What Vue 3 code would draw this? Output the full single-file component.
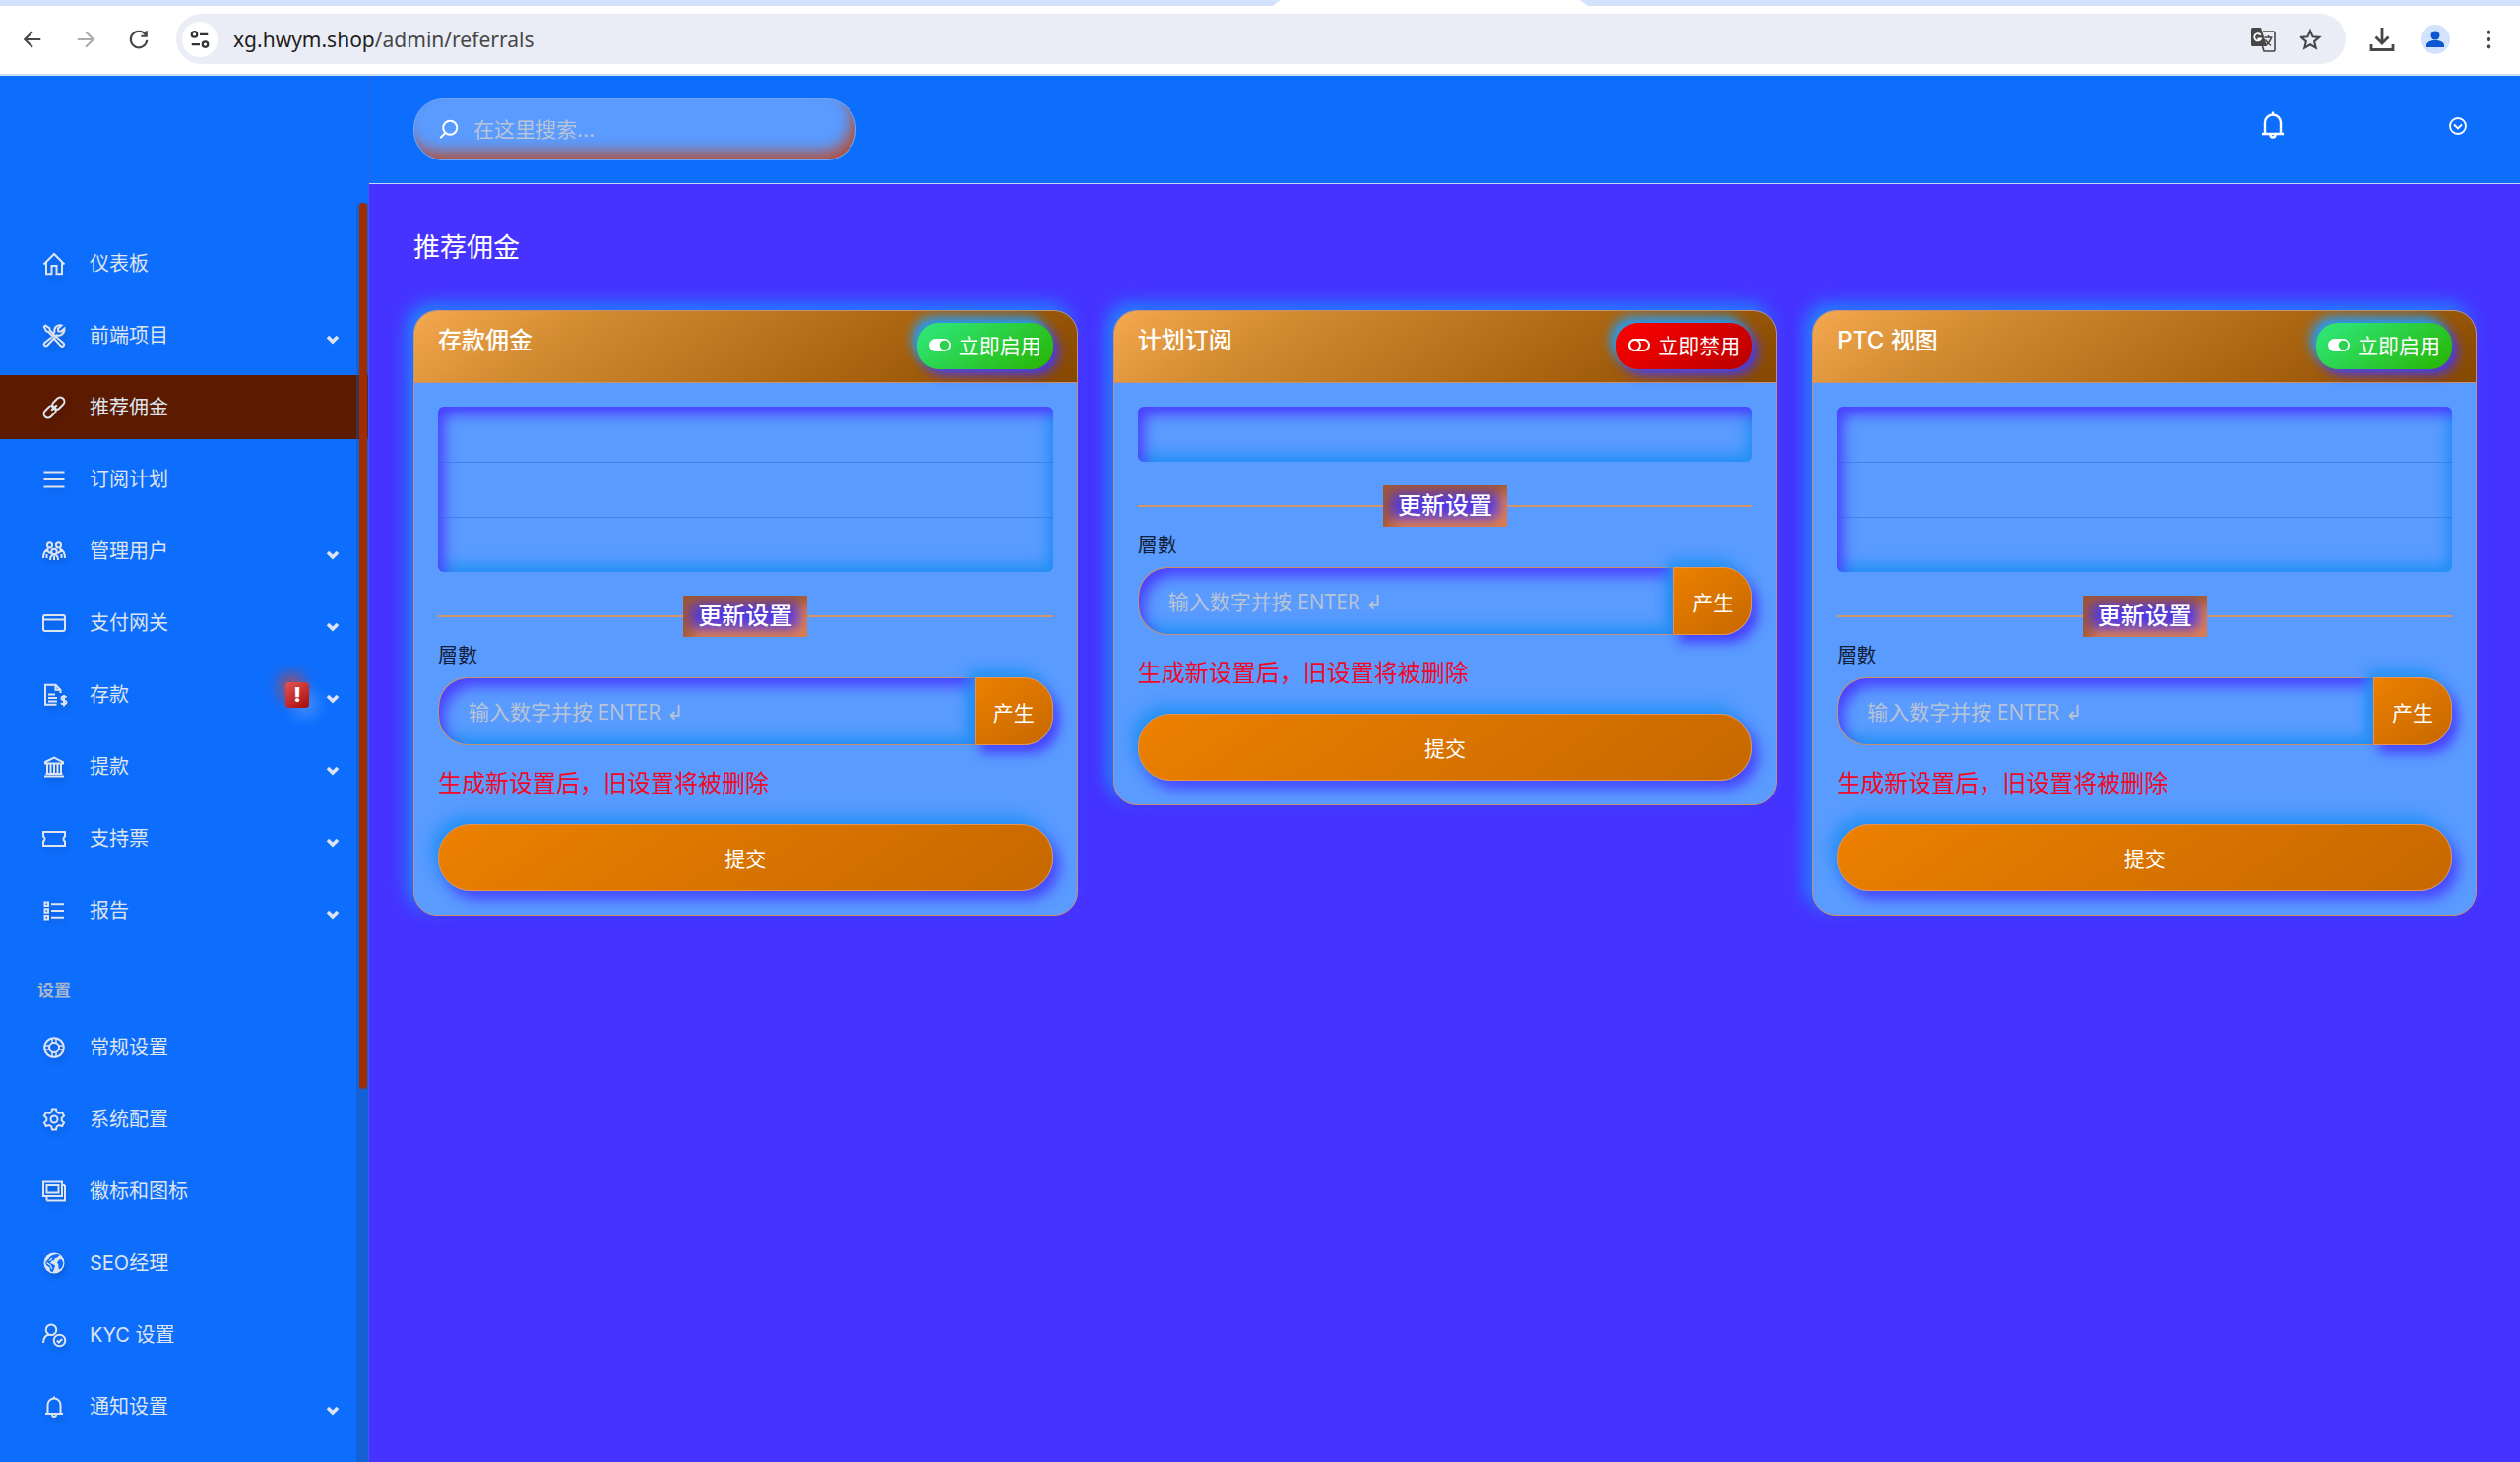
<template>
  <div class="window">
    <div class="tab-strip">
      <div class="active-tab"></div>
    </div>
    <div class="toolbar">
      <button class="tool" type="button" aria-label="后退">
        <svg viewBox="0 0 24 24" class="tool-icon"><path d="M21 12H4M12 3.500 3.500 12l8.500 8.500" /></svg>
      </button>
      <button class="tool tool-muted" type="button" aria-label="前进">
        <svg viewBox="0 0 24 24" class="tool-icon"><path d="M3 12h17M12 3.500l8.500 8.500-8.500 8.500" /></svg>
      </button>
      <button class="tool" type="button" aria-label="重新加载">
        <svg viewBox="0 0 24 24" class="tool-icon"><path d="M19.500 7A9 9 0 1 0 21 13M20.500 2.500V8.500H14.500" /></svg>
      </button>
      <div class="address">
        <span class="site-info">
          <svg viewBox="0 0 24 24" class="site-icon">
            <circle cx="6" cy="6.500" r="3" /><path d="M12 6.500h9M3 17.500h9" /><circle cx="18" cy="17.500" r="3" />
          </svg>
        </span>
        <span class="url"><b>xg.hwym.shop</b>/admin/referrals</span>
        <button class="tool" type="button" aria-label="翻译">
          <svg viewBox="0 0 26 26" class="translate-icon">
            <path d="M2.500 1H11l6 19H2.500A1.500 1.500 0 0 1 1 18.500v-16A1.500 1.500 0 0 1 2.500 1Z" fill="#474747" />
            <path d="M13 5h10.500A1.500 1.500 0 0 1 25 6.500v17a1.500 1.500 0 0 1-1.500 1.500H14l-1.500-5" fill="none" stroke="#474747" stroke-width="1.600" />
            <path d="M10.800 8.800A3.600 3.600 0 1 0 11 12.500H7.500" fill="none" stroke="#fff" stroke-width="1.800" />
            <path d="M14.500 11h8M18.500 9v2M21.500 11c-1 4-3 6-5.500 8M15.500 13.500c2 3 3.500 4.500 5.500 6" fill="none" stroke="#474747" stroke-width="1.500" />
          </svg>
        </button>
        <button class="tool" type="button" aria-label="收藏">
          <svg viewBox="0 0 24 24" class="tool-icon"><path d="m12 2.500 2.800 6.600 7.200.6-5.500 4.700 1.700 7-6.200-3.700-6.200 3.700 1.700-7L2 9.700l7.200-.6Z" /></svg>
        </button>
      </div>
      <button class="tool download" type="button" aria-label="下载">
        <svg viewBox="0 0 26 26" class="tool-icon"><path d="M13 1v16M6.500 10.500 13 17l6.500-6.500M2 18v5.500h22V18" stroke-width="2.800" /></svg>
      </button>
      <button class="tool profile" type="button" aria-label="个人资料">
        <svg viewBox="0 0 24 24" class="profile-icon"><circle cx="12" cy="8" r="4.500" /><path d="M3 20v-2c0-3.500 4.500-5 9-5s9 1.500 9 5v2Z" /></svg>
      </button>
      <button class="tool" type="button" aria-label="更多">
        <svg viewBox="0 0 24 24" class="more-icon"><circle cx="12" cy="4" r="2.400" /><circle cx="12" cy="12" r="2.400" /><circle cx="12" cy="20" r="2.400" /></svg>
      </button>
    </div>

    <div class="page">
      <aside class="sidebar">
        <nav class="menu">
          <a
            v-for="item in mainMenu"
            :key="item.label"
            href="#"
            class="menu-item"
            :class="{ active: item.active }"
          >
            <svg class="menu-icon" viewBox="0 0 24 24" v-html="icons[item.icon]"></svg>
            <span class="menu-label">{{ item.label }}</span>
            <span v-if="item.alert" class="alert">!</span>
            <svg v-if="item.children" class="chevron" viewBox="0 0 14 10"><path d="m2 2 5 5 5-5" /></svg>
          </a>
          <h2 class="menu-heading">设置</h2>
          <a v-for="item in settingsMenu" :key="item.label" href="#" class="menu-item">
            <svg class="menu-icon" viewBox="0 0 24 24" v-html="icons[item.icon]"></svg>
            <span class="menu-label">{{ item.label }}</span>
            <svg v-if="item.children" class="chevron" viewBox="0 0 14 10"><path d="m2 2 5 5 5-5" /></svg>
          </a>
        </nav>
        <div class="scroll-track"><div class="scroll-thumb"></div></div>
      </aside>

      <div class="content">
        <header class="topbar">
          <label class="search">
            <svg viewBox="0 0 24 24" class="search-icon"><circle cx="14" cy="10" r="8" /><path d="m8.500 16-6 6" /></svg>
            <input type="search" placeholder="在这里搜索..." aria-label="搜索" />
          </label>
          <button class="top-button" type="button" aria-label="通知">
            <svg viewBox="0 0 24 30" class="bell-icon">
              <path d="M4 24V12.500a8 8 0 0 1 16 0V24M1 24h22M12 4.500V1.500" /><path d="M9.500 25a2.500 2.500 0 1 0 5 0" />
            </svg>
          </button>
          <button class="top-button account" type="button" aria-label="账户">
            <svg viewBox="0 0 18 18" class="account-icon"><circle cx="9" cy="9" r="8" /><path d="m5 7.500 4 4 4-4" /></svg>
          </button>
        </header>

        <main class="main">
          <h1 class="title">推荐佣金</h1>
          <div class="cards">
            <section v-for="(card, index) in cards" :key="card.title" class="card">
              <div class="card-header">
                <h3>{{ card.title }}</h3>
                <button type="button" class="toggle" :class="card.enabled ? 'toggle-disable' : 'toggle-enable'">
                  <svg viewBox="0 0 22 13" class="toggle-icon">
                    <template v-if="card.enabled">
                      <rect x="1" y="1" width="20" height="11" rx="5.500" />
                      <circle cx="6.500" cy="6.500" r="5.500" />
                    </template>
                    <template v-else>
                      <rect x="0" y="0" width="22" height="13" rx="6.500" fill="#fff" stroke="none" />
                      <circle cx="15.500" cy="6.500" r="4.800" fill="#2dd251" stroke="none" />
                    </template>
                  </svg>
                  {{ card.enabled ? '立即禁用' : '立即启用' }}
                </button>
              </div>
              <div class="card-body">
                <ul class="levels">
                  <li v-for="row in card.levels" :key="row"></li>
                </ul>
                <div class="divider"><h4>更新设置</h4></div>
                <label class="field-label" :for="`level-${index}`">層數</label>
                <div class="input-group">
                  <input :id="`level-${index}`" type="text" placeholder="输入数字并按 ENTER ↲" />
                  <button type="button">产生</button>
                </div>
                <p class="warning">生成新设置后，旧设置将被删除</p>
                <button type="submit" class="submit">提交</button>
              </div>
            </section>
          </div>
        </main>
      </div>
    </div>
  </div>
</template>

<script setup>
const mainMenu = [
  { label: '仪表板', icon: 'home' },
  { label: '前端项目', icon: 'tools', children: true },
  { label: '推荐佣金', icon: 'link', active: true },
  { label: '订阅计划', icon: 'bars' },
  { label: '管理用户', icon: 'users', children: true },
  { label: '支付网关', icon: 'card', children: true },
  { label: '存款', icon: 'invoice', alert: true, children: true },
  { label: '提款', icon: 'bank', children: true },
  { label: '支持票', icon: 'ticket', children: true },
  { label: '报告', icon: 'list', children: true }
]

const settingsMenu = [
  { label: '常规设置', icon: 'ring' },
  { label: '系统配置', icon: 'gear' },
  { label: '徽标和图标', icon: 'images' },
  { label: 'SEO经理', icon: 'globe' },
  { label: 'KYC 设置', icon: 'userCheck' },
  { label: '通知设置', icon: 'bell', children: true }
]

const cards = [
  { title: '存款佣金', levels: 3, enabled: false },
  { title: '计划订阅', levels: 1, enabled: true },
  { title: 'PTC 视图', levels: 3, enabled: false }
]

const icons = {
  home: '<path d="M1.500 12.500 12 2l10.500 10.500M4 10.500v11.700h5.500V14h5v8.200H20V10.500"/>',
  tools:
    '<path d="m1.800 3 1.400-1.400 4 2.600.6 2.300 4.400 4.400-1.600 1.600-4.400-4.400-2.200-.8ZM14 13l7.500 6.500a1.900 1.900 0 0 1-2.700 2.700L12.500 15.500M9.500 13.500 2.200 19.200a2 2 0 0 0 2.800 2.800L14.800 11.500c3.500 1 8-1.500 7.600-7l-3.600 3.200-2.500-.4-.4-2.500L19.400 1.500c-4-1-8 2-7 6.500l-2 2"/>',
  link:
    '<g transform="rotate(-45 12 12)"><rect x="-1" y="7.800" width="14" height="8.400" rx="4.200"/><rect x="11" y="7.800" width="14" height="8.400" rx="4.200"/><path d="M8 12h8"/></g>',
  bars: '<path d="M1.500 4.500h21M1.500 12h21M1.500 19.500h21"/>',
  users:
    '<circle cx="7.500" cy="5.800" r="2.600"/><circle cx="16.500" cy="5.800" r="2.600"/><circle cx="12" cy="12.500" r="2.800"/><path d="M1 19c0-6 2.500-8.500 5.500-9.500M4.500 10.500c1 2 1.500 3 4.300 3.500M23 19c0-6-2.500-8.500-5.500-9.500M19.500 10.500c-1 2-1.500 3-4.300 3.500M4.500 15v4M19.500 15v4M8 21c0-3.500 1.500-5.500 4-5.500s4 2 4 5.500M12 17v4"/>',
  card: '<rect x="1" y="4" width="22" height="16" rx="2"/><path d="M1 8.500h22"/>',
  invoice:
    '<path d="M14.500 21.800H3V1.800h10.500l5 5V10M13.500 1.800v5h5M6 11.500h7M6 15h9M6 18.500h9"/><path d="M24.500 14.500c-1-1.300-5-1.500-5 1s5 1.300 5 3.800-4 2.500-5.500.8M22 12v11.500"/>',
  bank:
    '<path d="M3 7 12 2.500 21 7v1.500H3ZM2 21.500h20M3.500 19h17M5 9v9M8.500 9v9M12 9v9M15.500 9v9M19 9v9"/>',
  ticket: '<path d="M1 5h22v4.500a2.800 2.800 0 0 0 0 5V19H1v-4.500a2.800 2.800 0 0 0 0-5Z"/>',
  list:
    '<path d="M2.500 3.500h3.500v3.500H2.500ZM2.500 10.300h3.500v3.500H2.500ZM2.500 17h3.500v3.500H2.500ZM9 5.200h13M9 12h13M9 18.800h13"/>',
  ring:
    '<circle cx="12" cy="12" r="9.800"/><circle cx="12" cy="12" r="5"/><path d="M10 2.500v5M14 2.500v5M10 16.500v5M14 16.500v5M2.500 10h5M2.500 14h5M16.500 10h5M16.500 14h5" stroke-width="1.500"/>',
  gear:
    '<path d="M10 1.500h4l.7 3.200 2.300 1.300 3.100-1 2 3.500-2.400 2.100v2.800l2.400 2.100-2 3.500-3.100-1-2.300 1.300-.7 3.200h-4l-.7-3.200L7 18l-3.100 1-2-3.500 2.400-2.100v-2.800L1.900 8.500l2-3.500L7 6l2.300-1.300Z"/><circle cx="12" cy="12" r="3.500"/>',
  images: '<path d="M1 2.500h19v14.500H1ZM4.500 6h12v7.500h-12ZM23 6v15.500H4.500M20 6h3M4.500 17v4.500"/>',
  globe:
    '<circle cx="12" cy="12" r="10.500" fill="currentColor" stroke="none"/><path d="M12 3.500 16 3l1.500 1.500L15 6.500l-2 .5-1 2-2.500.5L8 12l2.500 1 2.500 1.500L12 18l-1.500 3.300L8 20l-.5-3.500L4 14l-.8-3L6 8l2.500-3Z" fill="#0d6efd" stroke="none"/><path d="m7 9.500 3-2.500M4.500 11.500 8 14l2 4" stroke-width="1.200"/><path d="m17 8.500 2.500-.5 1.800 3.500-.8 4-2.500 3-1.500-1-.2-4-1.300-2Z" fill="#0d6efd" stroke="none"/>',
  userCheck:
    '<circle cx="9" cy="6.800" r="5.300"/><path d="M1 20c.3-5 2.500-8 6-8.500"/><circle cx="17.500" cy="17.500" r="5.800"/><path d="m14.800 17.500 2 2 3.500-3.500"/>',
  bell: '<path d="M5.500 19V10a6.500 6.500 0 0 1 13 0v9M3 19h18M12 3.500V1.500M10 20a2 2 0 1 0 4 0"/>'
}
</script>

<style>
body {
  margin: 0;
  background: #4633ff;
}
</style>

<style scoped>
.window {
  display: flex;
  flex-direction: column;
  height: 100vh;
  overflow: hidden;
  font-family: Inter, "Noto Sans CJK SC", sans-serif;
  font-size: 20px;
  color: #fff;
}

button,
input {
  box-sizing: border-box;
  font-family: inherit;
  border: 0;
  margin: 0;
}

button {
  cursor: pointer;
}

h1,
h2,
h3,
h4,
p,
ul {
  margin: 0;
  padding: 0;
}

svg {
  display: block;
  flex: none;
  overflow: visible;
}

.tab-strip {
  height: 6px;
  flex: none;
  padding-left: 50.5%;
  background: #d3e3fd;
}

.active-tab {
  width: 320px;
  height: 6px;
  background: #fff;
  clip-path: polygon(8px 0, 312px 0, 320px 100%, 0 100%);
}

.toolbar {
  display: flex;
  align-items: center;
  flex: none;
  gap: 22px;
  height: 71px;
  box-sizing: border-box;
  padding: 0 16px 2px 17px;
  background: #fff;
  border-bottom: 2px solid #cbdff5;
}

.tool {
  display: flex;
  align-items: center;
  justify-content: center;
  width: 32px;
  height: 32px;
  padding: 0;
  flex: none;
  background: none;
  color: #474747;
}

.tool-muted {
  color: #adadad;
}

.tool-icon {
  width: 22px;
  height: 22px;
  fill: none;
  stroke: currentColor;
  stroke-width: 2.3;
}

.address {
  display: flex;
  align-items: center;
  flex: 1;
  gap: 16px;
  height: 51px;
  box-sizing: border-box;
  padding: 0 20px 0 6px;
  border-radius: 26px;
  background: #ebedf6;
}

.toolbar .download {
  margin-left: -1px;
}

.site-info {
  display: flex;
  align-items: center;
  justify-content: center;
  width: 36px;
  height: 36px;
  border-radius: 50%;
  background: #fff;
}

.site-icon {
  width: 22px;
  height: 22px;
  fill: none;
  stroke: #333;
  stroke-width: 2.4;
}

.url {
  flex: 1;
  font-family: "Noto Sans", sans-serif;
  font-size: 21px;
  line-height: 30px;
  color: #474747;
}

.url b {
  font-weight: 400;
  color: #1f1f1f;
}

.translate-icon {
  width: 26px;
  height: 26px;
}

.download .tool-icon {
  width: 26px;
  height: 26px;
}

.profile-icon {
  width: 24px;
  height: 24px;
  padding: 3px;
  border-radius: 50%;
  background: #d3e3fd;
  fill: #0b57d0;
}

.more-icon {
  width: 22px;
  height: 22px;
  fill: #474747;
}

.page {
  display: flex;
  flex: 1;
  min-height: 0;
}

.sidebar {
  position: relative;
  width: 375px;
  flex: none;
  box-sizing: border-box;
  padding-top: 129px;
  overflow: hidden;
  background: #0d6efd;
  border-right: 1px solid #2b65d8;
}

.menu {
  display: flex;
  flex-direction: column;
  gap: 8px;
  padding-top: 29px;
}

.menu-item {
  display: flex;
  align-items: center;
  flex: none;
  height: 65px;
  box-sizing: border-box;
  padding: 0 29px 0 43px;
  color: #dee4ee;
  text-decoration: none;
}

.menu-item.active {
  background: #5c1a00;
}

.menu-icon {
  width: 24px;
  height: 24px;
  margin-right: 24px;
  fill: none;
  stroke: currentColor;
  stroke-width: 2;
  filter: drop-shadow(2px 4px 3px rgba(0, 0, 0, 0.15));
}

.menu-label {
  flex: 1;
  font-size: 20px;
  line-height: 30px;
}

.chevron {
  width: 14px;
  height: 10px;
  margin: 8px 0 0 17px;
  fill: none;
  stroke: currentColor;
  stroke-width: 3.6;
}

.alert {
  width: 24px;
  height: 26px;
  border-radius: 4px;
  background: linear-gradient(145deg, #e55353, #a80a0a);
  box-shadow:
    -6px -8px 14px rgba(200, 70, 50, 0.7),
    8px 9px 14px rgba(90, 160, 255, 0.6);
  color: #fff;
  font-size: 20px;
  font-weight: 900;
  line-height: 26px;
  text-align: center;
}

.menu-heading {
  box-sizing: border-box;
  height: 58px;
  padding: 26px 0 0 38px;
  font-size: 17px;
  font-weight: 700;
  line-height: 30px;
  color: #a9b6cc;
}

.scroll-track {
  position: absolute;
  top: 129px;
  right: 0;
  bottom: 0;
  width: 12px;
  background: rgba(28, 82, 160, 0.45);
}

.scroll-thumb {
  width: 8px;
  height: 70.4%;
  margin: 0 1px 0 auto;
  border-radius: 4px;
  background: #a02c00;
}

.content {
  flex: 1;
  min-width: 0;
  background: #4633ff;
}

.topbar {
  display: flex;
  align-items: center;
  height: 110px;
  box-sizing: border-box;
  padding: 0 54px 0 45px;
  background: #0d6efd;
  border-bottom: 1px solid #c3d5f2;
}

.search {
  display: flex;
  align-items: center;
  gap: 15px;
  width: 450px;
  height: 63px;
  box-sizing: border-box;
  margin-right: auto;
  padding: 0 24px;
  border: 1px solid #6ea6f5;
  border-radius: 30px;
  background: #5a9bff;
  box-shadow: inset -6px -10px 14px -2px #b0533f;
}

.search-icon {
  width: 21px;
  height: 21px;
  fill: none;
  stroke: #fff;
  stroke-width: 2.2;
}

.search input {
  flex: 1;
  min-width: 0;
  padding: 0;
  background: none;
  outline: none;
  color: #fff;
  font-size: 21px;
}

.search input::placeholder {
  color: #b9c4d6;
}

.top-button {
  display: flex;
  align-items: center;
  justify-content: center;
  padding: 0;
  width: 30px;
  height: 40px;
  margin-bottom: 10px;
  background: none;
}

.bell-icon {
  width: 24px;
  height: 30px;
  fill: none;
  stroke: #fff;
  stroke-width: 2.4;
}

.account {
  width: 18px;
  margin: 0 0 8px 164px;
}

.account-icon {
  width: 18px;
  height: 18px;
  fill: none;
  stroke: #fff;
  stroke-width: 1.8;
}

.main {
  padding: 45px 44px 0 45px;
}

.title {
  margin-bottom: 43px;
  font-size: 27px;
  font-weight: 400;
  line-height: 40px;
}

.cards {
  display: grid;
  grid-template-columns: repeat(3, 1fr);
  align-items: start;
  gap: 36px;
}

.card {
  min-width: 0;
  border: 1px solid #c7906f;
  border-radius: 24px;
  background: #5a9bff;
  box-shadow:
    8px 8px 16px #4633ff,
    -6px -6px 18px #1e90ff;
}

.card-header {
  display: flex;
  justify-content: space-between;
  height: 73px;
  box-sizing: border-box;
  padding: 12px 24px;
  border-bottom: 1px solid #c7906f;
  border-radius: 23px 23px 0 0;
  background: linear-gradient(145deg, #f5a850, #d08a30 25%, #a8620f 70%, #854800);
}

.card-header h3 {
  font-size: 24px;
  font-weight: 500;
  line-height: 36px;
}

.toggle {
  display: flex;
  align-items: center;
  gap: 8px;
  height: 47px;
  padding: 1px 12px 0;
  border-radius: 22px;
  color: #fff;
  font-size: 21px;
  line-height: 30px;
  box-shadow:
    -5px -6px 12px #1ea0ff,
    5px 5px 12px #4633ff;
}

.toggle-enable {
  background: linear-gradient(145deg, #2eea80, #28b400);
}

.toggle-disable {
  background: linear-gradient(145deg, #ff0000, #b80000);
}

.toggle-icon {
  width: 22px;
  height: 13px;
  margin-bottom: 4px;
  fill: none;
  stroke: #fff;
  stroke-width: 2;
}

.card-body {
  padding: 24px;
}

.levels {
  list-style: none;
  border-radius: 6px;
  box-shadow:
    inset 8px 10px 14px -2px #4a40ff,
    inset -7px -10px 14px -2px #2491f5;
}

.levels li {
  box-sizing: border-box;
  height: 56px;
}

.levels li + li {
  border-top: 1px solid rgba(40, 100, 220, 0.45);
}

.divider {
  display: flex;
  align-items: center;
  margin: 24px 0 4px;
}

.divider::before,
.divider::after {
  content: "";
  flex: 1;
  height: 2px;
  background: #d39468;
}

.divider h4 {
  padding: 0 15px;
  background: #4f38e8;
  box-shadow:
    inset 8px 8px 14px #a3582f,
    inset -8px -8px 14px #e8854a;
  font-size: 24px;
  font-weight: 500;
  line-height: 42px;
}

.field-label {
  display: block;
  margin-bottom: 7px;
  color: #12203a;
  font-size: 20px;
  line-height: 30px;
}

.input-group {
  display: flex;
  height: 69px;
}

.input-group input {
  flex: 1;
  min-width: 0;
  padding: 0 30px;
  border: 1px solid #c7906f;
  border-right: 0;
  border-radius: 30px 0 0 30px;
  background: #5a9bff;
  box-shadow:
    inset 7px 10px 14px -2px #4a40ff,
    inset -7px -10px 14px -2px #2491f5;
  outline: none;
  color: #fff;
  font-family: "Open Sans", "Noto Sans CJK SC", sans-serif;
  font-size: 21px;
}

.input-group input::placeholder {
  color: #b9c4d6;
}

.input-group button {
  width: 80px;
  padding: 0;
  border: 1px solid #e8934f;
  border-radius: 0 30px 30px 0;
  background: linear-gradient(145deg, #ec8000, #c66800);
  box-shadow:
    -6px -8px 14px #2491f5,
    6px 8px 12px #4a40ff;
  color: #fff;
  font-size: 21px;
}

.warning {
  margin: 21px 0 23px;
  color: #f00a28;
  font-size: 24px;
  line-height: 36px;
}

.submit {
  display: block;
  width: 100%;
  height: 68px;
  border: 1px solid #e8934f;
  border-radius: 33px;
  background: linear-gradient(145deg, #ec8000, #c66800);
  box-shadow:
    -6px -8px 16px #2491f5,
    6px 8px 14px #4a40ff;
  color: #fff;
  font-size: 21px;
}
</style>
